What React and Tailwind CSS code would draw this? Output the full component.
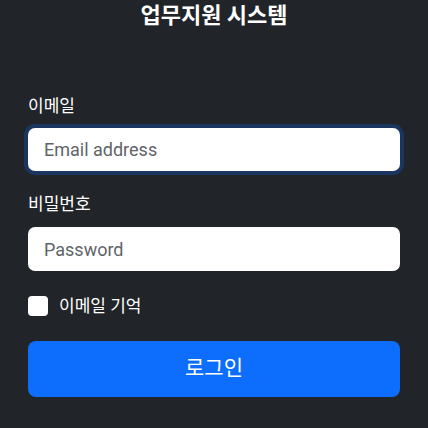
import React from 'react';

const KR = { fontFamily: 'Roboto, "Noto Sans CJK KR", sans-serif' };

export default function App() {
  return (
    <div className="w-[428px] h-[428px] bg-[#212529] text-white overflow-hidden" style={KR}>
      {/* Title */}
      <h1 className="text-center text-[22px] font-bold leading-8 h-8">업무지원 시스템</h1>

      <form className="px-7 pt-[61px] flex flex-col" onSubmit={(e) => e.preventDefault()}>
        <label className="text-[17px] leading-[26px] mb-[9px]">이메일</label>
        <input
          type="email"
          placeholder="Email address"
          className="h-[43px] w-full rounded-[7px] bg-white px-4 text-[18px] text-black placeholder:text-[#5f6468] outline-none ring-4 ring-[#1a3660]"
        />

        <label className="text-[17px] leading-[26px] mt-[20px] mb-[10px]">비밀번호</label>
        <input
          type="password"
          placeholder="Password"
          className="h-[44px] w-full rounded-[7px] bg-white px-4 text-[18px] text-black placeholder:text-[#5f6468] outline-none"
        />

        {/* Remember me */}
        <div className="flex items-center gap-[11px] mt-[25px]">
          <span className="w-5 h-5 rounded-[4px] bg-white" />
          <span className="text-[17px] leading-5">이메일 기억</span>
        </div>

        <button
          type="submit"
          className="mt-[25px] h-[56px] w-full rounded-[8px] bg-[#0d6efd] text-[21px] text-white"
        >
          로그인
        </button>
      </form>
    </div>
  );
}
